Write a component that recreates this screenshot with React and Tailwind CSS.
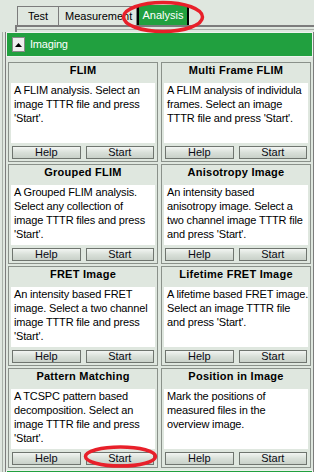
import React from "react";

const cards = [
  { title: "FLIM", lines: ["A FLIM analysis. Select an", "image TTTR file and press", "'Start'."] },
  { title: "Multi Frame FLIM", lines: ["A FLIM analysis of individula", "frames. Select an image", "TTTR file and press 'Start'."] },
  { title: "Grouped FLIM", lines: ["A Grouped FLIM analysis.", "Select any collection of", "image TTTR files and press", "'Start'."] },
  { title: "Anisotropy Image", lines: ["An intensity based", "anisotropy image. Select a", "two channel image TTTR file", "and press 'Start'."] },
  { title: "FRET Image", lines: ["An intensity based FRET", "image. Select a two channel", "image TTTR file and press", "'Start'."] },
  { title: "Lifetime FRET Image", lines: ["A lifetime based FRET image.", "Select an image TTTR file", "and press 'Start'."] },
  { title: "Pattern Matching", lines: ["A TCSPC pattern based", "decomposition. Select an", "image TTTR file and press", "'Start'."] },
  { title: "Position in Image", lines: ["Mark the positions of", "measured files in the", "overview image."] },
];

function SmallButton({ label }) {
  return (
    <button className="flex-1 h-[13px] border border-[#6f756f] bg-gradient-to-b from-[#f2f5f2] via-[#d9e0d9] to-[#c9d1c9] text-[11px] leading-[11px] text-[#0a0a14] text-center">
      {label}
    </button>
  );
}

function AnalysisCard({ title, lines }) {
  return (
    <div className="h-[100px] border border-[#8a918a] flex flex-col">
      <div className="h-[20px] leading-[14px] text-center font-bold tracking-[0.25px]">{title}</div>
      <div className="h-[60px] mx-[2px] bg-white px-[3px] leading-[14px] tracking-[-0.15px] whitespace-nowrap overflow-hidden">
        {lines.map((line, i) => (
          <div key={i}>{line}</div>
        ))}
      </div>
      <div className="mt-[3px] flex gap-[5px] px-[3px]">
        <SmallButton label="Help" />
        <SmallButton label="Start" />
      </div>
    </div>
  );
}

export default function App() {
  return (
    <div className="relative w-[314px] h-[472px] overflow-hidden bg-[#dfe7df] font-['Liberation_Sans',Arial,sans-serif] text-[11px] text-black">
      {/* tabs */}
      <div className="flex h-[25px] pl-[17px] pt-[6px]">
        <div className="w-[41px] h-[19px] border-t border-l border-[#7c7c7c] flex items-center justify-center">Test</div>
        <div className="w-[79px] h-[19px] border-t border-l border-r border-[#7c7c7c] flex items-center pl-[6px] whitespace-nowrap overflow-hidden">
          Measurement
        </div>
        <div className="w-[52px] h-[20px] -mt-[1px] bg-[#21a03f] border-l-2 border-r-2 border-black flex items-center justify-center text-white">
          Analysis
        </div>
      </div>
      <div className="ml-[15px] h-[7px] border-t-2 border-l-2 border-[#7c7c7c]">
        <div className="h-[3px] border-b border-[#a9b0a9]"></div>
      </div>

      {/* section */}
      <div className="ml-[2px] border-l border-[#aab2aa] pl-[2px]">
        <div className="w-[309px] border-l border-r border-[#7c7c7c]">
          <div className="h-[25px] bg-[#21a03f] border border-[#eef3ee] flex items-center gap-[5px] pl-[5px]">
            <div className="w-[13px] h-[15px] bg-[#eeeeee] border border-[#8a8a8a] flex items-center justify-center">
              <svg width="7" height="4" viewBox="0 0 7 4">
                <path d="M3.5 0 L7 4 L0 4 Z" fill="#000" />
              </svg>
            </div>
            <span className="text-white tracking-[-0.2px]">Imaging</span>
          </div>

          <div className="grid grid-cols-2 gap-x-[3px] gap-y-[2px] px-[2px] pt-[5px]">
            {cards.map((c) => (
              <AnalysisCard key={c.title} title={c.title} lines={c.lines} />
            ))}
          </div>

          <div className="mt-[2px] h-[24px] bg-[#21a03f] border border-[#eef3ee]"></div>
        </div>
      </div>

      {/* red highlight marks */}
      <svg className="absolute left-0 top-0 pointer-events-none" width="314" height="472">
        <ellipse cx="163" cy="17" rx="39.5" ry="14.5" fill="none" stroke="#e8202a" strokeWidth="3.5" />
        <ellipse cx="120.5" cy="456.5" rx="35" ry="9.5" fill="none" stroke="#e8202a" strokeWidth="3.5" />
      </svg>
    </div>
  );
}
